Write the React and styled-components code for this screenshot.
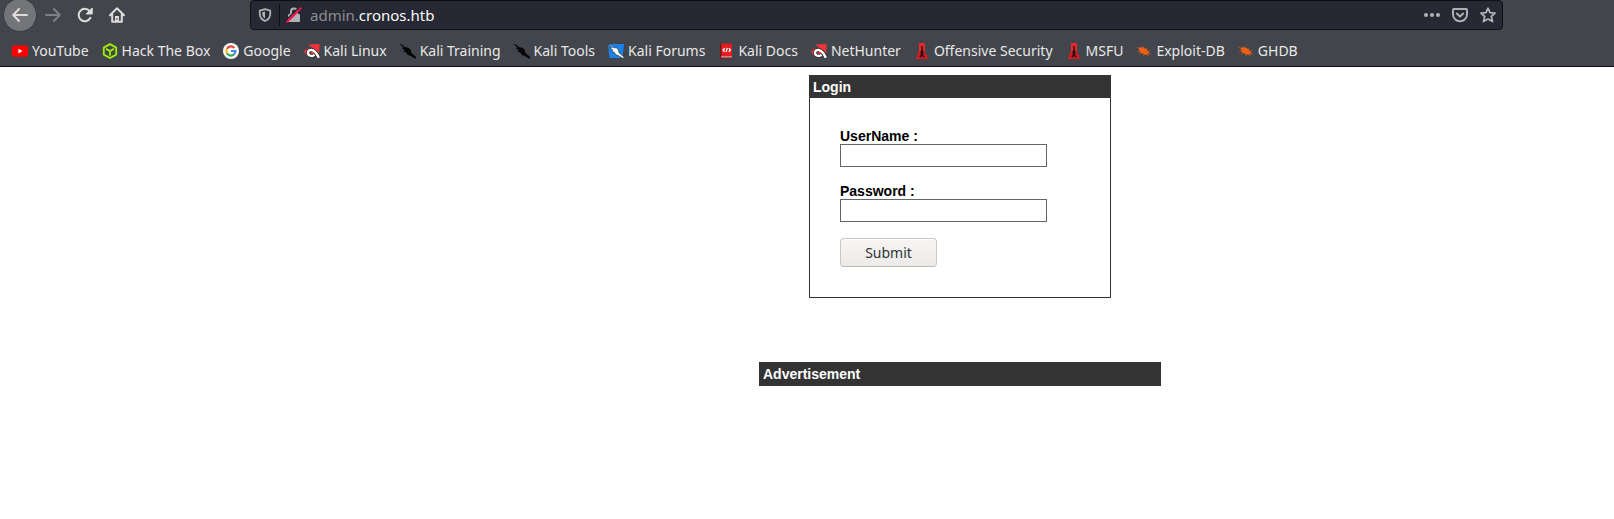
import React from "react";
import styled, { createGlobalStyle } from "styled-components";

const GlobalStyle = createGlobalStyle`
  * { box-sizing: border-box; }
  body {
    margin: 0;
    background: #ffffff;
    color: #000000;
    font-family: "Liberation Sans", Arial, sans-serif;
    font-size: 14px;
  }
`;

const Chrome = styled.header`
  background: #42454c;
  border-bottom: 1px solid #0c0c0d;
  font-family: "Noto Sans", sans-serif;
  font-size: 14px;
  overflow: hidden;
`;

const Toolbar = styled.div`
  display: flex;
  align-items: center;
  height: 30px;
  padding: 0 111px 0 3px;
`;

const ToolButton = styled.button`
  display: flex;
  flex: none;
  align-items: center;
  justify-content: center;
  width: ${(p) => (p.$round ? 34 : 32)}px;
  height: ${(p) => (p.$round ? 34 : 32)}px;
  padding: 0;
  border: ${(p) => (p.$round ? "1px solid #383a40" : "0")};
  border-radius: 50%;
  background: ${(p) => (p.$round ? "#737578" : "transparent")};
  color: ${(p) => (p.$muted ? "#7d7f83" : "#dcdcda")};
`;

const AddressBar = styled.div`
  display: flex;
  align-items: center;
  flex: 1;
  min-width: 0;
  height: 30px;
  margin-left: 117px;
  border: 1px solid #0e0f13;
  border-radius: 4px;
  background: #262833;
`;

const AddressButton = styled.button`
  display: flex;
  flex: none;
  align-items: center;
  justify-content: center;
  width: 28px;
  height: 28px;
  padding: 0;
  border: 0;
  background: none;
  color: #b0b1b3;
`;

const Divider = styled.span`
  flex: none;
  width: 1px;
  height: 22px;
  background: #0e0f13;
`;

const Address = styled.div`
  flex: 1;
  min-width: 0;
  padding-left: 2px;
  color: #f9f9fa;
  font-size: 15px;
  line-height: 28px;
  white-space: nowrap;
`;

const Subdomain = styled.span`
  color: #8c8d92;
`;

const Bookmarks = styled.nav`
  display: flex;
  align-items: center;
  gap: 13px;
  height: 36px;
  padding: 6px 12px 0;
`;

const Bookmark = styled.a`
  display: flex;
  flex: none;
  align-items: center;
  gap: 4px;
  color: #e8e8e6;
  line-height: 20px;
  text-decoration: none;
  white-space: nowrap;
`;

const Page = styled.main`
  display: flex;
  flex-direction: column;
  align-items: center;
  gap: 64px;
  padding: 8px 0 8px 306px;
`;

const LoginPanel = styled.section`
  width: 302px;
  border: 1px solid #333333;
`;

const AdPanel = styled.section`
  width: 402px;
`;

const PanelTitle = styled.h1`
  margin: 0;
  padding: 3px;
  background: #333333;
  color: #ffffff;
  font-size: 14px;
  font-weight: bold;
  line-height: ${(p) => (p.$tall ? 18 : 16)}px;
  padding-left: ${(p) => (p.$tall ? 4 : 3)}px;
`;

const Form = styled.form`
  display: flex;
  flex-direction: column;
  align-items: flex-start;
  gap: 16px;
  padding: 30px;
`;

const Field = styled.div`
  display: flex;
  flex-direction: column;
`;

const Label = styled.label`
  font-weight: bold;
  line-height: 16px;
`;

const TextBox = styled.input`
  width: 207px;
  height: 23px;
  padding: 1px 2px;
  border: 1px solid #666666;
  background: #ffffff;
  outline: none;
`;

const SubmitButton = styled.button`
  width: 97px;
  height: 29px;
  padding: 0;
  border: 1px solid #cdc7c2;
  border-bottom-color: #bfb8b1;
  border-radius: 4px;
  background: linear-gradient(#f6f5f4, #edebe9);
  box-shadow: inset 0 1px #ffffff;
  color: #2e3436;
  font-family: "Noto Sans", sans-serif;
  font-size: 14px;
  line-height: 20px;
`;

const Svg = ({ children, size = 16 }) => (
  <svg width={size} height={size} viewBox="0 0 16 16" fill="none" aria-hidden="true">
    {children}
  </svg>
);

const stroke = {
  stroke: "currentColor",
  strokeWidth: 2,
  strokeLinecap: "round",
  strokeLinejoin: "round",
};

const BackIcon = () => (
  <Svg><path {...stroke} d="M15 8H1.5M7 2 1.2 8 7 14" /></Svg>
);
const ForwardIcon = () => (
  <Svg><path {...stroke} d="M1 8h13.5M9 2l5.8 6L9 14" /></Svg>
);
const ReloadIcon = () => (
  <Svg>
    <path {...stroke} d="M13.4 10.8A6.2 6.2 0 1 1 12.6 4" />
    <path fill="currentColor" d="M15.2 1v6h-6z" stroke="currentColor" strokeLinejoin="round" />
  </Svg>
);
const HomeIcon = () => (
  <Svg>
    <path {...stroke} d="M1 8.2 8 1.3l7 6.9M3.2 7v7.8h9.6V7" />
    <path fill="currentColor" d="M6 9h4v6H6z" />
    <path fill="#42454c" d="M7.4 11.2h1.2v1.6H7.4z" />
  </Svg>
);
const ShieldIcon = () => (
  <Svg size={14}>
    <path {...stroke} d="M8 1.2 14 3v3.5c0 4-2.4 6.8-6 8.4-3.600-1.600-6-4.400-6-8.400V3z" />
    <path fill="currentColor" d="M8 4v8c-2-1.200-3.200-3.200-3.200-5.500V4.900z" />
  </Svg>
);
const LockIcon = () => (
  <Svg>
    <path {...stroke} d="M5 8V4.500a3 3 0 0 1 6 0V8" />
    <rect x="2" y="7" width="12" height="8" rx="1" fill="currentColor" />
    <path d="M0 13.400 13.400 0" stroke="#262833" strokeWidth="1.500" />
    <path d="M1.200 14.800 14.800 1.200" stroke="#f5104a" strokeWidth="2" strokeLinecap="round" />
  </Svg>
);
const DotsIcon = () => (
  <Svg>
    <g fill="currentColor">
      <circle cx="2" cy="8" r="2" /><circle cx="8" cy="8" r="2" /><circle cx="14" cy="8" r="2" />
    </g>
  </Svg>
);
const PocketIcon = () => (
  <Svg>
    <path {...stroke} d="M2 2h12q1 0 1 1v4.500a7 6.700 0 0 1-14 0V3q0-1 1-1z" />
    <path {...stroke} d="m4.800 6.500 3.200 3 3.200-3" />
  </Svg>
);
const StarIcon = () => (
  <Svg>
    <path {...stroke} strokeWidth="1.800" d="m8 1.200 2 4.500 5 .5-3.700 3.300 1.200 5L8 12l-4.500 2.500 1.200-5L1 6.200l5-.5z" />
  </Svg>
);

const YouTubeIcon = () => (
  <Svg>
    <rect x="0" y="2.500" width="16" height="11.200" rx="2.600" fill="#ff0000" />
    <path d="M6.400 5.800v4.600L10.500 8.100z" fill="#fff" />
  </Svg>
);
const BoxIcon = () => (
  <Svg>
    <path stroke="#9fef00" strokeWidth="1.800" strokeLinejoin="round" d="M8 1.100 14.200 4.600v7L8 15 1.800 11.600v-7zM4 5.800l4 2.300 4-2.300M8 8.100v4.600" />
  </Svg>
);
const GoogleIcon = () => (
  <Svg>
    <circle cx="8" cy="8" r="8" fill="#fff" />
    <g strokeWidth="2.200">
      <path stroke="#ea4335" d="M4 5.800A4.500 4.500 0 0 1 11.300 4.900" />
      <path stroke="#fbbc05" d="M4 10.300a4.500 4.500 0 0 1 0-4.600" />
      <path stroke="#34a853" d="M10.900 11.400A4.500 4.500 0 0 1 4 10.200" />
      <path stroke="#4285f4" d="M8 8h4.500a4.500 4.500 0 0 1-1.700 3.500" />
    </g>
  </Svg>
);
const KaliIcon = () => (
  <Svg>
    <path fill="#ef3337" d="M4 1.500 15.700 1 15 11.500 12 8 8 4.500z" />
    <path fill="#ef3337" d="M0 8 4 5 5.500 6 2.500 9.500 4.500 14 1.500 11z" />
    <path stroke="#25262b" strokeWidth="3.800" d="M14.500 14.200C12.800 10.500 11 7.500 7.500 7 3.700 6.500 2.800 11 5.800 12.500c1.500.8 3.500.5 4.700-.8" />
    <path stroke="#fff" strokeWidth="2.400" d="M14.800 14.800C13 10.700 11 7.500 7.500 7 3.700 6.500 2.800 11 5.800 12.500c1.500.8 3.500.5 4.700-.8" />
    <path fill="#ef3337" d="M6.500 9.300h3l1 1.700h-3z" />
  </Svg>
);
const dragonPath = "M0 1.200 2 1.800 5 4.300l3.500.7 2 1.800.8 3.200L16 14l-.5 1.700-5-3-2.700-.9L6.500 9.600 3.500 8.300l1.500-.8L2.200 5l1.600-.2z";
const DaggerIcon = () => (
  <Svg><path fill="#050505" stroke="#050505" strokeWidth=".3" d={dragonPath} /></Svg>
);
const ForumIcon = () => (
  <Svg>
    <path fill="#1b82ec" d="M0 1h16l-1.500 14H1.500z" />
    <path fill="#fff" stroke="#2b343d" strokeWidth=".7" d={dragonPath} />
  </Svg>
);
const DocsIcon = () => (
  <Svg>
    <path fill="#7e0d10" d="M2 1.500 3.500.5V15.500H2z" />
    <path fill="#e51b20" d="M3.500.5H14v13H3.500z" />
    <path fill="#e7dede" d="M3 13.500h11v1.200H3z" />
    <path fill="#a50d12" d="M2 14.500h12v1.200H2z" />
    <path stroke="#fff" strokeWidth="1.300" d="M6.700 5.200 5 7l1.700 1.800M10.800 5.200 12.500 7l-1.700 1.800M9.300 5l-1.200 4" />
  </Svg>
);
const OffSecIcon = () => (
  <Svg>
    <path fill="#e8282b" d="M4.900 0h6v8.800L14 15.800H2l2.900-7z" />
    <path fill="#d5191d" d="M4.900 9h6L14 15.800H2z" />
    <path fill="#2a1014" d="M7.300 3h1.400v3.500l1 2.500-.6 2.500 1.500 2.500-1.100.6L8 13l-1.500 1.600-1.100-.6 1.500-2.500L6.300 9l1-2.500z" />
  </Svg>
);
const BugIcon = () => (
  <Svg>
    <path fill="#ee6014" d="M2.500 5.800 4.500 4l5 1.500 3.500 3.700-.6 2-3.400.5-4.500-2.200z" />
    <path stroke="#ee6014" strokeWidth=".7" d="m1 4.300 4 2.200M1.300 8.500 5 8m-2 3.200 3-1.700m1.500 3.200 1-2M6.500 3l2 3M11.500 4.500 10 7.200m4.500-.2-2.500 1.500m2.800 2.700-3.300-1m1 3.300-2-2.800" />
  </Svg>
);

const bookmarks = [
  ["YouTube", YouTubeIcon],
  ["Hack The Box", BoxIcon],
  ["Google", GoogleIcon],
  ["Kali Linux", KaliIcon],
  ["Kali Training", DaggerIcon],
  ["Kali Tools", DaggerIcon],
  ["Kali Forums", ForumIcon],
  ["Kali Docs", DocsIcon],
  ["NetHunter", KaliIcon],
  ["Offensive Security", OffSecIcon],
  ["MSFU", OffSecIcon],
  ["Exploit-DB", BugIcon],
  ["GHDB", BugIcon],
];

export default function App() {
  return (
    <>
      <GlobalStyle />
      <Chrome>
        <Toolbar>
          <ToolButton $round aria-label="Back"><BackIcon /></ToolButton>
          <ToolButton $muted aria-label="Forward"><ForwardIcon /></ToolButton>
          <ToolButton aria-label="Reload"><ReloadIcon /></ToolButton>
          <ToolButton aria-label="Home"><HomeIcon /></ToolButton>
          <AddressBar>
            <AddressButton aria-label="Tracking protection"><ShieldIcon /></AddressButton>
            <Divider />
            <AddressButton aria-label="Connection is not secure"><LockIcon /></AddressButton>
            <Address role="textbox" aria-label="Address" tabIndex={0}>
              <Subdomain>admin.</Subdomain>cronos.htb
            </Address>
            <AddressButton aria-label="Page actions"><DotsIcon /></AddressButton>
            <AddressButton aria-label="Save to Pocket"><PocketIcon /></AddressButton>
            <AddressButton aria-label="Bookmark this page"><StarIcon /></AddressButton>
          </AddressBar>
        </Toolbar>
        <Bookmarks aria-label="Bookmarks">
          {bookmarks.map(([name, Icon]) => (
            <Bookmark key={name} href="#"><Icon />{name}</Bookmark>
          ))}
        </Bookmarks>
      </Chrome>
      <Page>
        <LoginPanel>
          <PanelTitle>Login</PanelTitle>
          <Form onSubmit={(e) => e.preventDefault()}>
            <Field>
              <Label htmlFor="username">UserName :</Label>
              <TextBox id="username" type="text" />
            </Field>
            <Field>
              <Label htmlFor="password">Password :</Label>
              <TextBox id="password" type="password" />
            </Field>
            <SubmitButton type="submit">Submit</SubmitButton>
          </Form>
        </LoginPanel>
        <AdPanel>
          <PanelTitle as="h2" $tall>Advertisement</PanelTitle>
        </AdPanel>
      </Page>
    </>
  );
}
